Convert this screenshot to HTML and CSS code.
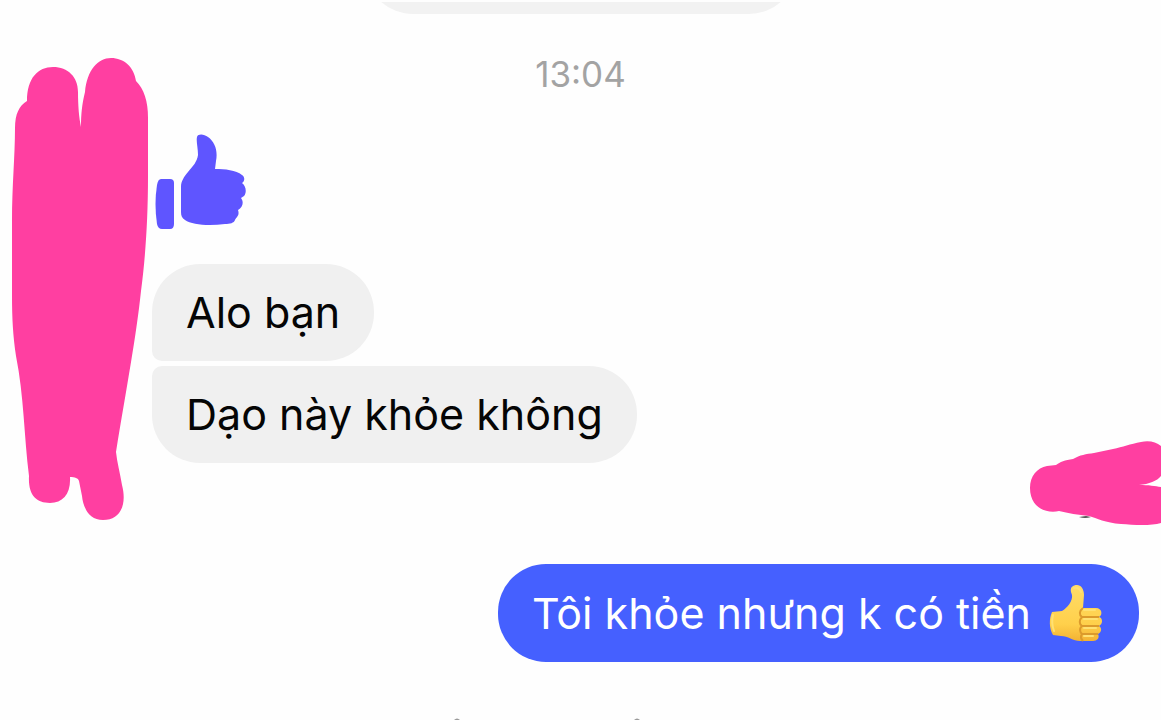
FILE: index.html
```html
<!DOCTYPE html>
<html lang="vi">
<head>
<meta charset="utf-8">
<meta name="viewport" content="width=device-width, initial-scale=1">
<title>Chat</title>
<link rel="stylesheet" href="styles.css">
</head>
<body>
<main class="chat">
  <div class="previous"><div class="previous-bubble"></div></div>
  <time class="time">13:04</time>
  <section class="received">
    <svg class="like" viewBox="0 0 94 98" role="img" aria-label="Like">
      <path d="M9 46H18Q22 46 22 50V91Q22 96 18 96H10Q6 96 5 91Q2 71 5 52Q6 46 9 46Z"/>
      <path d="M45 4C46 .5 52 1 56 4C63 9 66 18 64 28L63 36C73 36 84 37 90 42C93 44 93 48 90 50C94 53 95 59 92 63L89 65C92 69 91 74 86 77C88 83 84 84 83 87C82 90 78 91 73 91C57 93 40 92 33 87C30 85 29 83 29 79V54C29 48 32 44 36 39C41 33 45 29 46 22C46 15 44 8 45 4Z"/>
    </svg>
    <p class="bubble bubble-first">Alo bạn</p>
    <p class="bubble bubble-last">Dạo này khỏe không</p>
  </section>
  <section class="sent">
    <p class="bubble bubble-sent">Tôi khỏe nhưng k có tiền
      <svg class="emoji" viewBox="0 0 54 58" role="img" aria-label="👍">
        <defs>
          <linearGradient id="skin" x1="0" y1="0" x2="0" y2="1">
            <stop offset="0" stop-color="#ffdc68"/>
            <stop offset=".7" stop-color="#ffd04b"/>
            <stop offset="1" stop-color="#f3b233"/>
          </linearGradient>
        </defs>
        <path fill="url(#skin)" d="M22 8C21 3 24 1 28 1C32 1 35 5 35 11L34 24H47C53 24 54 31 50 33C54 34 54 40 50 42C53 44 53 48 49 50C51 54 48 57 44 57H31C24 57 19 52 12 52L4 51C0 44 0 35 3 28L13 27C18 24 24 17 23 11Z"/>
        <path class="crease" d="M34 24C30 27 30 31 33 33H50M33 33C30 36 30 40 33 42H50M33 42C30 44 31 49 33 50H49M33 50C31 53 32 55 34 57"/>
        <path class="shine" d="M35 26H46M35 35H48M35 44H47M35 52H44M25 4Q30 3 32 8M4 31Q2 39 5 47"/>
      </svg>
    </p>
  </section>
  <svg class="next" viewBox="0 0 190 3" aria-hidden="true">
    <path d="M3 3Q6 0 9 3ZM183 3Q186 0 189 3Z"/>
  </svg>
  <svg class="scribble scribble-left" viewBox="0 0 140 466" aria-hidden="true">
    <path d="M17 45C17 22 28 11 43 11C58 11 68 21 68 36C68 50 69 62 71 71C71 58 72 48 75 36C77 14 88 2 101 2C114 2 124 11 126 25C134 33 138 45 138 62V120C138 166 135 205 131 235C126 282 117 329 106 396C107 406 110 417 112 429C117 448 111 464 93 464C78 464 73 450 72 440L69 425C68 422 65 421 60 421C61 438 53 447 40 447C26 447 18 439 19 420C14 380 14 340 6 300C3 280 2 262 2 240V165C2 130 5 100 5 72C5 58 9 50 17 45Z"/>
  </svg>
  <svg class="scribble scribble-right" viewBox="0 0 132 86" aria-hidden="true">
    <path class="mark" d="M50 77Q56 79 62 77L57 76Z"/>
    <path d="M18 26L27 25C31 22 36 20 44 19C51 15 57 14 65 13L84 9C94 7 101 4 112 2C120 0 127 2 132 6V36C128 41 120 44 110 45C120 45 126 46 132 47V83C122 86 105 85 92 84C76 83 68 78 60 76C49 75 39 73 30 71C18 74 1 68 1 48C1 36 8 28 18 26Z"/>
  </svg>
</main>
</body>
</html>
```
FILE: styles.css
```css
* {
  box-sizing: border-box;
}

body {
  margin: 0;
  background: #fefefe;
  color: #050505;
  font-family: Inter, "Noto Sans", sans-serif;
}

.chat {
  position: relative;
  display: flex;
  flex-direction: column;
  min-height: 100vh;
  overflow: hidden;
}

.previous {
  display: flex;
  flex-direction: column;
  justify-content: flex-end;
  align-items: center;
  height: 12px;
  margin-top: 2px;
  overflow: hidden;
}

.previous-bubble {
  flex: none;
  width: 432px;
  height: 96px;
  border-radius: 48px;
  background: #f2f2f2;
}

.time {
  margin-top: 40px;
  color: #a3a3a3;
  font-size: 35px;
  line-height: 40px;
  text-align: center;
}

.received {
  display: flex;
  flex-direction: column;
  align-items: flex-start;
  gap: 5px;
  margin-top: 39px;
  padding-left: 152px;
}

.like {
  width: 94px;
  height: 98px;
  margin-bottom: 28px;
  fill: #5f55ff;
}

.bubble {
  display: flex;
  align-items: center;
  gap: 18px;
  margin: 0;
  padding: 20px 34px;
  border-radius: 48px;
  background: #f0f0f0;
  font-size: 43px;
  line-height: 57px;
}

.bubble-first {
  border-bottom-left-radius: 10px;
}

.bubble-last {
  border-top-left-radius: 10px;
}

.sent {
  display: flex;
  justify-content: flex-end;
  margin-top: 101px;
  padding-right: 22px;
}

.bubble-sent {
  padding-right: 36px;
  background: #4560ff;
  color: #fff;
}

.emoji {
  width: 54px;
  height: 58px;
}

.crease {
  fill: none;
  stroke: #dc9a2c;
  stroke-width: 2;
}

.shine {
  fill: none;
  stroke: #ffe173;
  stroke-width: 2;
  stroke-linecap: round;
}

.next {
  width: 190px;
  height: 3px;
  margin: auto auto 0 451px;
  fill: #999;
}

.scribble {
  position: absolute;
  fill: #ff3fa1;
}

.scribble-left {
  top: 56px;
  left: 10px;
  width: 140px;
  height: 466px;
}

.scribble-right {
  top: 440px;
  right: 0;
  width: 132px;
  height: 86px;
}

.mark {
  fill: #555;
}
```
